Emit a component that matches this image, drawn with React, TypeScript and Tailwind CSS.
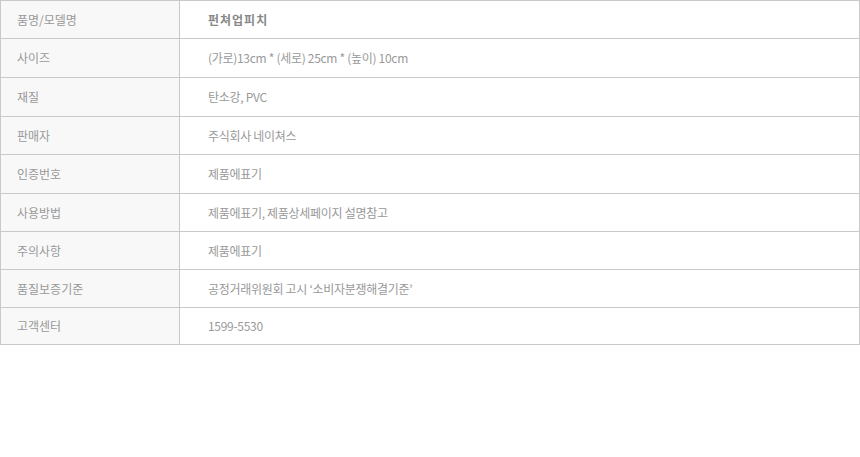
import React from 'react';

const rows = [
  { label: '품명/모델명', value: '펀쳐업피치', bold: true, h: 'h-[38px]' },
  { label: '사이즈', value: '(가로)13cm * (세로) 25cm * (높이) 10cm', h: 'h-[39px]' },
  { label: '재질', value: '탄소강, PVC', h: 'h-[39px]' },
  { label: '판매자', value: '주식회사 네이쳐스', h: 'h-[38px]' },
  { label: '인증번호', value: '제품에표기', h: 'h-[39px]' },
  { label: '사용방법', value: '제품에표기, 제품상세페이지 설명참고', h: 'h-[38px]' },
  { label: '주의사항', value: '제품에표기', h: 'h-[38px]' },
  { label: '품질보증기준', value: '공정거래위원회 고시 ‘소비자분쟁해결기준’', h: 'h-[38px]' },
  { label: '고객센터', value: '1599-5530', h: 'h-[37px]' },
];

const App: React.FC = () => {
  return (
    <div
      className="w-[860px] h-[457px] bg-white text-[12px] text-[#999999]"
      style={{ fontFamily: '"Noto Sans CJK KR", "Noto Sans", sans-serif' }}
    >
      <div className="border-t border-l border-r border-[#c9c9c9]">
        {rows.map((row) => (
          <div key={row.label} className={`flex ${row.h} border-b border-[#c9c9c9]`}>
            <div className="w-[179px] shrink-0 bg-[#f8f8f8] border-r border-[#c9c9c9] flex items-center pl-[16px]">
              {row.label}
            </div>
            <div
              className={`flex-1 flex items-center pl-[28px] ${row.bold ? 'font-bold text-[#888888] tracking-[1px]' : 'tracking-[-0.3px]'}`}
            >
              {row.value}
            </div>
          </div>
        ))}
      </div>
    </div>
  );
};

export default App;
